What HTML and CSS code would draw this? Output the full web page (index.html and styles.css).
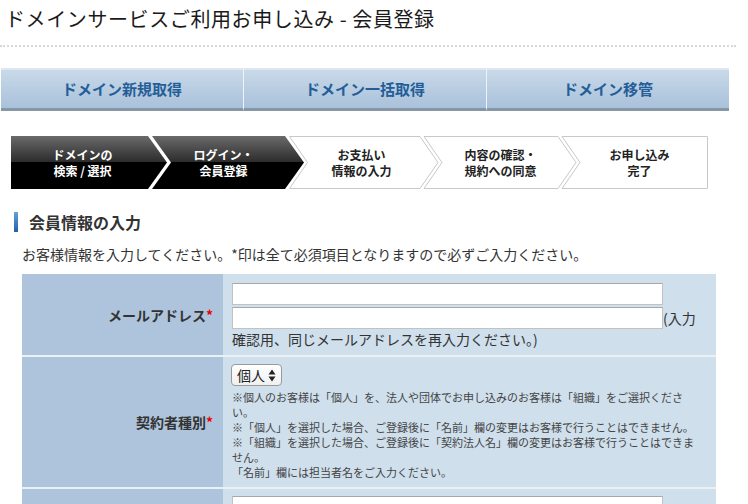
FILE: index.html
```html
<!DOCTYPE html>
<html lang="ja">
<head>
    <meta charset="UTF-8">
    <meta name="viewport" content="width=device-width, initial-scale=1.0">
    <title>ドメインサービスご利用お申し込み - 会員登録</title>
    <link rel="stylesheet" href="styles.css">
</head>
<body>
    <h1 class="page-title">ドメインサービスご利用お申し込み - 会員登録</h1>

    <div class="tabs">
        <a class="tab" href="#">ドメイン新規取得</a>
        <a class="tab" href="#">ドメイン一括取得</a>
        <a class="tab" href="#">ドメイン移管</a>
    </div>

    <div class="steps">
        <svg class="steps-bg" width="697" height="53" viewBox="0 0 697 53">
            <defs>
                <linearGradient id="dark" x1="0" y1="0" x2="0" y2="1">
                    <stop offset="0" stop-color="#6a6a6a"/>
                    <stop offset="0.49" stop-color="#2c2c2c"/>
                    <stop offset="0.5" stop-color="#000"/>
                    <stop offset="1" stop-color="#000"/>
                </linearGradient>
            </defs>
            <path d="M0 0 H137 L156 26.5 L137 53 H0 Z" fill="url(#dark)"/>
            <path d="M141 0 H274 L293 26.5 L274 53 H141 L160 26.5 Z" fill="url(#dark)"/>
            <path d="M278.5 0.5 H409 L427 26.5 L409 52.5 H278.5 L296.5 26.5 Z" fill="#fff" stroke="#c8c8c8"/>
            <path d="M413 0.5 H547 L565 26.5 L547 52.5 H413 L431 26.5 Z" fill="#fff" stroke="#c8c8c8"/>
            <path d="M551 0.5 H696.5 V52.5 H551 L569 26.5 Z" fill="#fff" stroke="#c8c8c8"/>
        </svg>
        <div class="step done">ドメインの<br>検索 / 選択</div>
        <div class="step done">ログイン・<br>会員登録</div>
        <div class="step">お支払い<br>情報の入力</div>
        <div class="step">内容の確認・<br>規約への同意</div>
        <div class="step">お申し込み<br>完了</div>
    </div>

    <h2 class="section-title">会員情報の入力</h2>
    <p class="intro">お客様情報を入力してください。*印は全て必須項目となりますので必ずご入力ください。</p>

    <table class="form-table">
        <tr>
            <th>メールアドレス<span class="req">*</span></th>
            <td class="mail-cell">
                <input type="text" class="text-input first">
                <input type="text" class="text-input">(入力確認用、同じメールアドレスを再入力ください。)
            </td>
        </tr>
        <tr>
            <th>契約者種別<span class="req">*</span></th>
            <td>
                <label class="select-box">
                    <select>
                        <option>個人</option>
                        <option>組織</option>
                    </select>
                    <svg width="8" height="13" viewBox="0 0 8 13">
                        <path d="M4 0.5 L7.5 5.5 H0.5 Z M4 12.5 L7.5 7.5 H0.5 Z" fill="#222"/>
                    </svg>
                </label>
                <div class="notes">
                    ※個人のお客様は「個人」を、法人や団体でお申し込みのお客様は「組織」をご選択ください。<br>
                    ※「個人」を選択した場合、ご登録後に「名前」欄の変更はお客様で行うことはできません。<br>
                    ※「組織」を選択した場合、ご登録後に「契約法人名」欄の変更はお客様で行うことはできません。<br>
                    「名前」欄には担当者名をご入力ください。
                </div>
            </td>
        </tr>
        <tr>
            <th>&nbsp;</th>
            <td><input type="text" class="text-input"></td>
        </tr>
    </table>
</body>
</html>
```

FILE: styles.css
```css
body {
    margin: 0;
    font-family: "Noto Sans CJK JP", "Noto Sans", sans-serif;
    color: #333;
    background-color: white;
}

.page-title {
    margin: 0;
    padding: 4px 5px 11px;
    font-size: 20px;
    font-weight: normal;
    letter-spacing: 0.6px;
    line-height: 30px;
    color: #1a1a1a;
    border-bottom: 2px dotted #d3d9df;
    width: 726px;
}

.tabs {
    display: flex;
    width: 728px;
    margin: 21px 0 0 1px;
}

.tab {
    flex: 1;
    height: 38px;
    line-height: 38px;
    text-align: center;
    font-size: 15px;
    font-weight: bold;
    color: #245e98;
    text-decoration: none;
    background: linear-gradient(#c9d9e9, #a9c1da);
    border-top: 2px solid #dde7f1;
    border-bottom: 3px solid #8796a7;
}

.tab + .tab {
    border-left: 1px solid #eef3f8;
}

.steps {
    position: relative;
    display: grid;
    grid-template-columns: 143px 139px 137px 141px 137px;
    width: 697px;
    height: 53px;
    margin: 25px 0 0 11px;
}

.steps-bg {
    position: absolute;
    left: 0;
    top: 0;
}

.step {
    position: relative;
    display: flex;
    align-items: center;
    justify-content: center;
    text-align: center;
    font-size: 12px;
    font-weight: bold;
    line-height: 16px;
    color: #222;
}

.step.done {
    color: white;
}

.section-title {
    margin: 23px 0 0 14px;
    padding-left: 11px;
    font-size: 16px;
    line-height: 20px;
    color: #333;
    border-left: 4px solid #2f74ba;
    border-image: linear-gradient(#6aa5dc, #1a5ea5) 1;
}

.intro {
    margin: 13px 0 0 22px;
    font-size: 14px;
    line-height: 18px;
    color: #333;
}

.form-table {
    width: 694px;
    margin: 11px 0 0 22px;
    border-collapse: collapse;
}

.form-table th {
    width: 191px;
    padding: 0 10px 0 0;
    text-align: right;
    vertical-align: middle;
    font-size: 14px;
    color: #333;
    background-color: #adc4dc;
    border-top: 2px solid #e9f0f6;
}

.form-table td {
    padding: 7px 14px 7px 9px;
    font-size: 14px;
    line-height: 21px;
    color: #333;
    background-color: #cfdfec;
    border-top: 2px solid #e9f0f6;
}

.form-table tr:first-child th,
.form-table tr:first-child td {
    border-top: none;
}

.form-table .mail-cell {
    padding-top: 9px;
    padding-bottom: 5px;
}

.req {
    color: #e00;
}

.text-input {
    width: 431px;
    height: 22px;
    box-sizing: border-box;
    margin: 0;
    border: 1px solid #c2c2c2;
    border-top-color: #a8a8a8;
    background-color: white;
    vertical-align: bottom;
}

.text-input.first {
    display: block;
    margin-bottom: 2px;
}

.select-box {
    display: inline-flex;
    align-items: center;
    gap: 3px;
    height: 22px;
    box-sizing: border-box;
    margin-left: -1px;
    padding: 0 5px 0 5px;
    border: 1px solid #9a9a9a;
    border-radius: 4px;
    background: linear-gradient(#ffffff, #f0f0f0);
}

.select-box select {
    appearance: none;
    border: none;
    background: transparent;
    padding: 0;
    font-family: inherit;
    font-size: 14px;
    color: #222;
    outline: none;
}

.notes {
    margin-top: 4px;
    font-size: 11px;
    line-height: 15px;
    color: #444;
}
```
